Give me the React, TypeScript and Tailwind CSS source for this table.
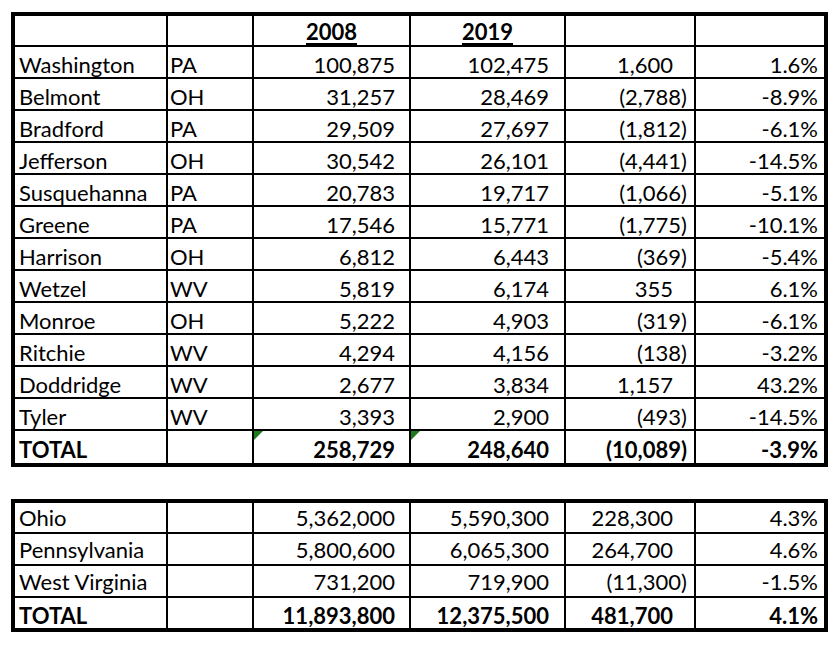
import React from "react";

type Row = { name: string; st: string; a: string; b: string; c: string; d: string; total?: boolean; flag?: boolean };

const top: Row[] = [
  { name: "Washington", st: "PA", a: "100,875", b: "102,475", c: "1,600", d: "1.6%" },
  { name: "Belmont", st: "OH", a: "31,257", b: "28,469", c: "(2,788)", d: "-8.9%" },
  { name: "Bradford", st: "PA", a: "29,509", b: "27,697", c: "(1,812)", d: "-6.1%" },
  { name: "Jefferson", st: "OH", a: "30,542", b: "26,101", c: "(4,441)", d: "-14.5%" },
  { name: "Susquehanna", st: "PA", a: "20,783", b: "19,717", c: "(1,066)", d: "-5.1%" },
  { name: "Greene", st: "PA", a: "17,546", b: "15,771", c: "(1,775)", d: "-10.1%" },
  { name: "Harrison", st: "OH", a: "6,812", b: "6,443", c: "(369)", d: "-5.4%" },
  { name: "Wetzel", st: "WV", a: "5,819", b: "6,174", c: "355", d: "6.1%" },
  { name: "Monroe", st: "OH", a: "5,222", b: "4,903", c: "(319)", d: "-6.1%" },
  { name: "Ritchie", st: "WV", a: "4,294", b: "4,156", c: "(138)", d: "-3.2%" },
  { name: "Doddridge", st: "WV", a: "2,677", b: "3,834", c: "1,157", d: "43.2%" },
  { name: "Tyler", st: "WV", a: "3,393", b: "2,900", c: "(493)", d: "-14.5%" },
];

const bottom: Row[] = [
  { name: "Ohio", st: "", a: "5,362,000", b: "5,590,300", c: "228,300", d: "4.3%" },
  { name: "Pennsylvania", st: "", a: "5,800,600", b: "6,065,300", c: "264,700", d: "4.6%" },
  { name: "West Virginia", st: "", a: "731,200", b: "719,900", c: "(11,300)", d: "-1.5%" },
];

function Flag() {
  return (
    <span className="absolute left-0 top-0 h-0 w-0 border-t-[9px] border-r-[9px] border-t-[#1d7a1d] border-r-transparent" />
  );
}

function DataRow({ r, first, h, pt }: { r: Row; first?: boolean; h: string; pt: string }) {
  const neg = r.c.startsWith("(");
  return (
    <div className={`flex ${h} ${first ? "" : "border-t-2 border-black"} ${r.total ? "font-bold" : ""}`}>
      <div className={`flex w-[151px] items-center pl-[4px] ${pt}`}>{r.name}</div>
      <div className={`flex w-[86px] items-center border-l-2 border-black pl-[2px] ${pt}`}>{r.st}</div>
      <div className={`relative flex w-[157px] items-center justify-end border-l-2 border-black pr-[14px] ${pt}`}>
        {r.flag && <Flag />}
        {r.a}
      </div>
      <div className={`relative flex w-[155px] items-center justify-end border-l-2 border-black pr-[15px] ${pt}`}>
        {r.flag && <Flag />}
        {r.b}
      </div>
      <div className={`flex w-[130px] items-center justify-end border-l-2 border-black ${neg ? "pr-[7px]" : "pr-[21px]"} ${pt}`}>
        {r.c}
      </div>
      <div className={`flex w-[130px] items-center justify-end border-l-2 border-black pr-[6px] ${pt}`}>{r.d}</div>
    </div>
  );
}

export default function App() {
  return (
    <div className="min-h-[646px] w-[838px] bg-white pl-[11px] pt-[12px] font-['Lato',sans-serif] text-[22px] leading-none text-black">
      <div className="w-[817px] border-4 border-black">
        <div className="flex h-[29px] font-bold">
          <div className="w-[151px]" />
          <div className="w-[86px] border-l-2 border-black" />
          <div className="flex w-[157px] items-end justify-center border-l-2 border-black pb-[2px]">
            <span className="underline decoration-2 underline-offset-[3px]">2008</span>
          </div>
          <div className="flex w-[155px] items-end justify-center border-l-2 border-black pb-[2px]">
            <span className="underline decoration-2 underline-offset-[3px]">2019</span>
          </div>
          <div className="w-[130px] border-l-2 border-black" />
          <div className="w-[130px] border-l-2 border-black" />
        </div>
        {top.map((r) => (
          <DataRow key={r.name} r={r} h="h-[32px]" pt="pt-[5px]" />
        ))}
        <DataRow
          r={{ name: "TOTAL", st: "", a: "258,729", b: "248,640", c: "(10,089)", d: "-3.9%", total: true, flag: true }}
          h="h-[34px]"
          pt="pt-[6px]"
        />
      </div>

      <div className="mt-[32px] w-[817px] border-4 border-black">
        {bottom.map((r, i) => (
          <DataRow key={r.name} r={r} first={i === 0} h={i === 0 ? "h-[29px]" : "h-[32px]"} pt={i === 0 ? "pt-0" : "pt-[2px]"} />
        ))}
        <DataRow
          r={{ name: "TOTAL", st: "", a: "11,893,800", b: "12,375,500", c: "481,700", d: "4.1%", total: true }}
          h="h-[32px]"
          pt="pt-[5px]"
        />
      </div>
    </div>
  );
}
